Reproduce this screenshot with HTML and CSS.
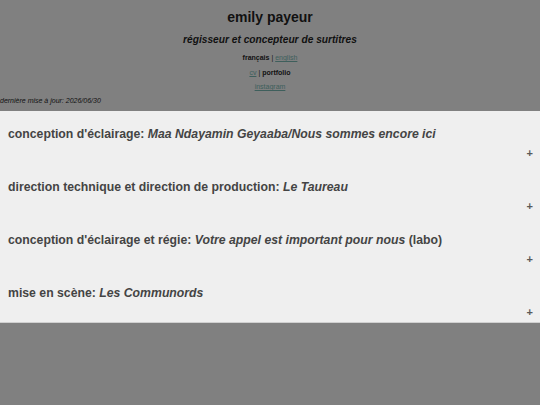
FILE: index.html
```html
<!DOCTYPE html>
<html lang="fr">
<head>
<meta charset="utf-8">
<title>emily payeur</title>
<link rel="stylesheet" href="styles.css">
</head>
<body>
<header class="top">
  <h1 class="name">emily payeur</h1>
  <h2 class="role">régisseur et concepteur de surtitres</h2>
  <p class="nav"><b>français</b> | <a href="#">english</a></p>
  <p class="nav"><a href="#">cv</a> | <b>portfolio</b></p>
  <p class="nav"><a href="#">instagram</a></p>
  <p class="updated">dernière mise à jour: 2026/06/30</p>
</header>
<main class="panel">
  <section class="entry">
    <h3 class="entry-title">conception d'éclairage: <i>Maa Ndayamin Geyaaba/Nous sommes encore ici</i></h3>
    <div class="toggle">+</div>
  </section>
  <section class="entry">
    <h3 class="entry-title">direction technique et direction de production: <i>Le Taureau</i></h3>
    <div class="toggle">+</div>
  </section>
  <section class="entry">
    <h3 class="entry-title">conception d'éclairage et régie: <i>Votre appel est important pour nous</i> (labo)</h3>
    <div class="toggle">+</div>
  </section>
  <section class="entry">
    <h3 class="entry-title">mise en scène: <i>Les Communords</i></h3>
    <div class="toggle">+</div>
  </section>
</main>
</body>
</html>
```
FILE: styles.css
```css
html, body {
  margin: 0;
  padding: 0;
  background: #808080;
  font-family: "Liberation Sans", Arial, sans-serif;
  color: #111;
}
.top {
  text-align: center;
  padding-top: 8px;
}
.name {
  margin: 0;
  font-size: 14px;
  line-height: 18px;
  font-weight: bold;
}
.role {
  margin: 7px 0 0;
  font-size: 10.2px;
  line-height: 14px;
  font-style: italic;
  font-weight: bold;
}
.nav {
  margin: 6px 0 0;
  font-size: 7px;
  line-height: 10px;
}
.nav + .nav {
  margin-top: 4.5px;
}
.nav a {
  color: #3e5f5c;
}
.updated {
  margin: 4px 0 0;
  text-align: left;
  font-size: 7px;
  line-height: 10px;
  font-style: italic;
}
.panel {
  margin-top: 5px;
  background: #efefef;
  border-bottom: 1px solid #d0d0d0;
  color: #444;
}
.entry {
  padding: 15px 7px 3px 8px;
}
.entry:last-child {
  padding-bottom: 2px;
}
.entry-title {
  margin: 0;
  font-size: 12.25px;
  line-height: 17px;
  font-weight: bold;
}
.toggle {
  text-align: right;
  font-size: 11px;
  line-height: 16px;
  font-weight: bold;
  color: #5a5a5a;
  margin-top: 2px;
}
```
